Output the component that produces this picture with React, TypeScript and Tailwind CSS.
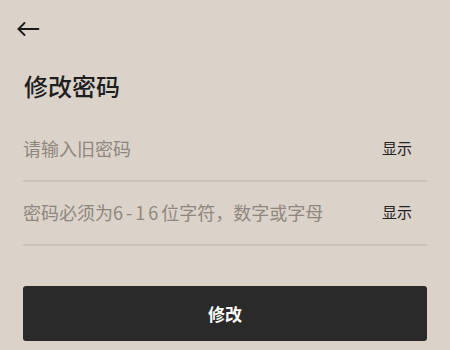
import React from "react";

export default function App() {
  const font = { fontFamily: '"Noto Sans CJK SC", "Noto Sans", sans-serif' };
  return (
    <div className="w-[450px] h-[350px] overflow-hidden bg-[#dbd3c9] text-[#222]" style={font}>
      <div className="pl-[17px] pt-[22px] h-[70px]">
        <svg width="23" height="14" viewBox="0 0 23 14" fill="none" stroke="#1a1a1a" strokeWidth="1.8" strokeLinecap="round" strokeLinejoin="round">
          <path d="M1.5 7H21.5" />
          <path d="M7.5 1L1.5 7L7.5 13" />
        </svg>
      </div>
      <div className="px-[23px]">
        <h1 className="text-[24px] leading-[32px] h-[32px] font-medium text-[#1e1e1e] pl-[1px]">修改密码</h1>
        <div className="mt-[16px] h-[64px] flex items-center justify-between border-b-2 border-[#cbc3b9] pb-[2px]">
          <span className="text-[18px] text-[#8e8780]">请输入旧密码</span>
          <span className="text-[15px] text-[#222] pr-[15px]">显示</span>
        </div>
        <div className="h-[64px] flex items-center justify-between border-b-2 border-[#cbc3b9] pb-[2px]">
          <span className="text-[18px] text-[#8e8780]">
            密码必须为<span className="tracking-[3px]">6-16</span>位字符，数字或字母
          </span>
          <span className="text-[15px] text-[#222] pr-[15px]">显示</span>
        </div>
        <button className="mt-[40px] w-full h-[55px] rounded-[3px] bg-[#2a2a2a] text-white text-[17px] font-bold flex items-center justify-center">
          修改
        </button>
      </div>
    </div>
  );
}
